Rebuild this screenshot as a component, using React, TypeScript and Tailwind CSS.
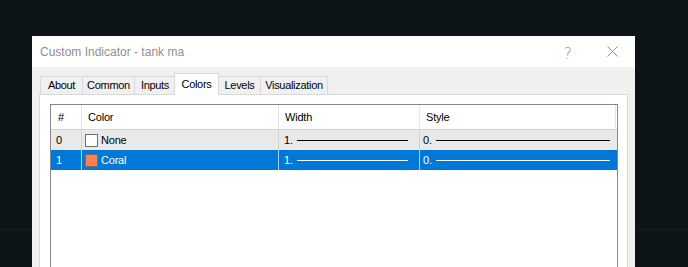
import React from "react";

const tabs = [
  { label: "About", w: "w-[42px]" },
  { label: "Common", w: "w-[52px]" },
  { label: "Inputs", w: "w-[41px]" },
  { label: "Colors", w: "w-[45px]", active: true },
  { label: "Levels", w: "w-[42px]" },
  { label: "Visualization", w: "w-[68px]", last: true },
];

type Row = { idx: string; name: string; swatch: string; selected?: boolean };
const rows: Row[] = [
  { idx: "0", name: "None", swatch: "bg-white" },
  { idx: "1", name: "Coral", swatch: "bg-[#ff7f50]", selected: true },
];

export default function App() {
  return (
    <div
      className="relative w-[688px] h-[267px] overflow-hidden bg-[#0c1417]"
      style={{ fontFamily: '"Liberation Sans", Arial, sans-serif' }}
    >
      <div className="absolute left-0 top-[229px] h-px w-full bg-[#11211e]" />
      <div className="relative z-10 ml-[32px] mt-[36px] w-[603px] h-[260px] flex flex-col bg-[#f0f0f0]">
        {/* title bar */}
        <div className="h-[31px] shrink-0 bg-white flex items-center pl-[8px] pr-[17px]">
          <span className="text-[12px] text-[#8f8f8f]">Custom Indicator - tank ma</span>
          <span
            className="ml-auto mr-[35px] pt-[5px] text-[15px] text-[#8f8f8f] leading-none"
            style={{ fontFamily: '"DejaVu Sans", sans-serif', fontWeight: 300 }}
          >
            ?
          </span>
          <svg width="11" height="11" viewBox="0 0 11 11" className="text-[#8f8f8f]">
            <path d="M0.5 0.5 L10.5 10.5 M10.5 0.5 L0.5 10.5" stroke="currentColor" strokeWidth="1" fill="none" />
          </svg>
        </div>
        {/* body */}
        <div className="flex-1 flex flex-col px-[7px] pt-[6px]">
          <div className="flex items-end pl-[1px] h-[22px] -mb-px relative z-10">
            {tabs.map((t) =>
              t.active ? (
                <div
                  key={t.label}
                  className={`${t.w} h-[22px] bg-white border border-b-0 border-[#d9d9d9] flex items-start pt-[2px] justify-center text-[11px] text-black tracking-[-0.3px] -ml-px -mr-px relative z-10`}
                >
                  {t.label}
                </div>
              ) : (
                <div
                  key={t.label}
                  className={`${t.w} h-[18px] bg-[#f0f0f0] border-t border-l ${t.last ? "border-r" : ""} border-[#d9d9d9] flex items-center justify-center text-[11px] text-black tracking-[-0.3px] mb-px`}
                >
                  {t.label}
                </div>
              )
            )}
          </div>
          {/* tab page */}
          <div className="flex-1 bg-white border border-[#d9d9d9] pl-[10px] pr-[9px] pt-[9px]">
            <div className="h-full border border-[#828790] bg-white text-[11px] tracking-[-0.2px]">
              {/* header */}
              <div className="flex h-[25px] border-b border-[#d5d5d5] text-black">
                <div className="w-[31px] border-r border-[#e5e5e5] flex items-center pl-[7px]">#</div>
                <div className="w-[197px] border-r border-[#e5e5e5] flex items-center pl-[6px]">Color</div>
                <div className="w-[141px] border-r border-[#e5e5e5] flex items-center pl-[6px]">Width</div>
                <div className="flex-1 border-r border-[#e5e5e5] flex items-center pl-[6px]">Style</div>
                <div className="w-px" />
              </div>
              {rows.map((r) => {
                const sel = r.selected;
                const bg = sel ? "bg-[#0078d7] text-white" : "bg-[#e9e9e9] text-black";
                const sep = sel ? "border-[#a9cdec]" : "border-[#d3d3d3]";
                const line = sel ? "bg-white" : "bg-black";
                return (
                  <div key={r.idx} className={`flex h-[20px] ${bg}`}>
                    <div className={`w-[31px] border-r ${sep} flex items-center pl-[5px]`}>{r.idx}</div>
                    <div className={`w-[197px] border-r ${sep} flex items-center pl-[3px]`}>
                      <span className={`w-[13px] h-[13px] border border-[#6f6f6f] ${r.swatch}`} />
                      <span className="ml-[3px]">{r.name}</span>
                    </div>
                    <div className={`w-[141px] border-r ${sep} flex items-center pl-[5px] pr-[11px]`}>
                      <span>1.</span>
                      <span className={`ml-[4px] flex-1 h-px ${line}`} />
                    </div>
                    <div className="flex-1 flex items-center pl-[3px] pr-[7px]">
                      <span>0.</span>
                      <span className={`ml-[4px] flex-1 h-px ${line}`} />
                    </div>
                  </div>
                );
              })}
            </div>
          </div>
        </div>
      </div>
    </div>
  );
}
